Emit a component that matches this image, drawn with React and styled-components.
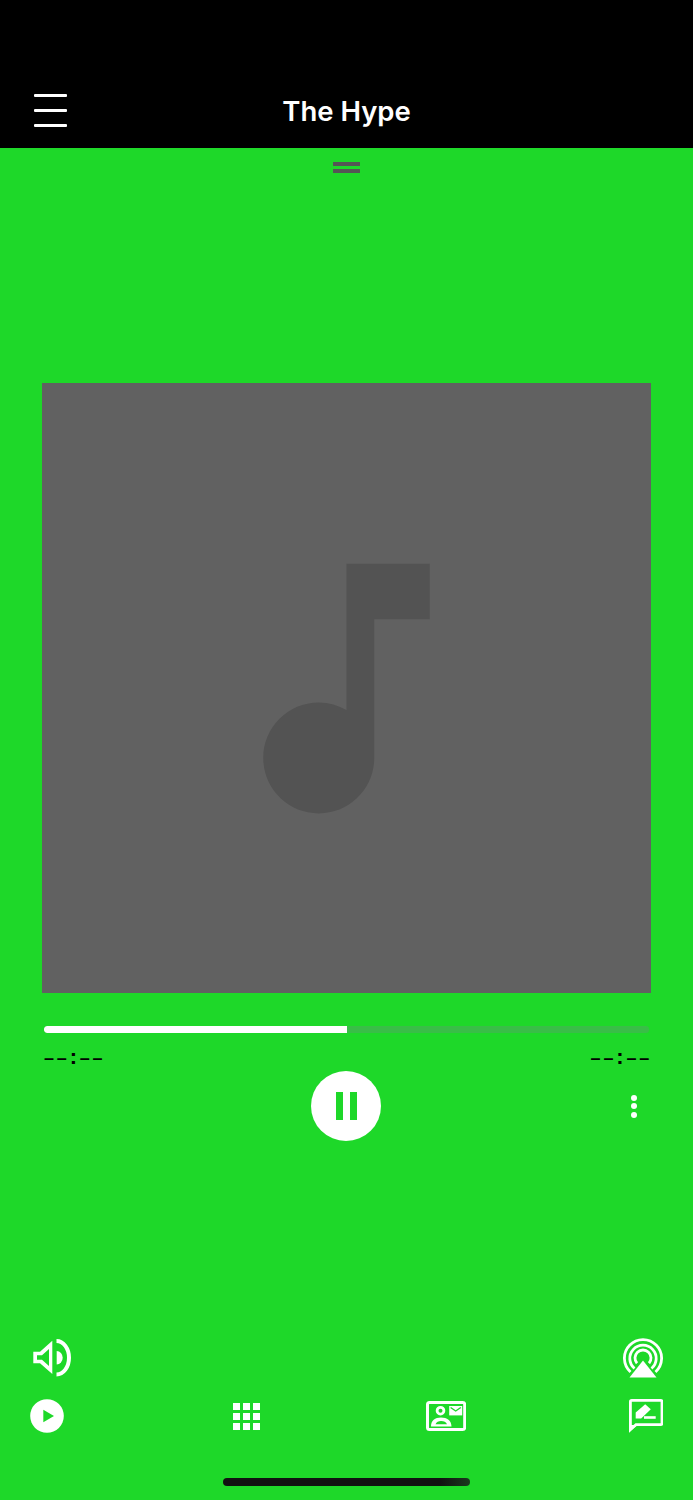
import styled, { createGlobalStyle } from "styled-components";

const green = "#1ed829";

const GlobalStyle = createGlobalStyle`
  html, body {
    margin: 0;
    padding: 0;
    background: ${green};
  }
`;

const Screen = styled.div`
  width: 100%;
  height: 1500px;
  display: flex;
  flex-direction: column;
  overflow: hidden;
  font-family: Inter, "Liberation Sans", sans-serif;
`;

const Header = styled.header`
  height: 148px;
  box-sizing: border-box;
  background: #000;
  display: grid;
  grid-template-columns: 1fr auto 1fr;
  align-items: center;
  padding: 73px 0 0 34px;
`;

const Burger = styled.button`
  width: 33px;
  height: 34px;
  padding: 0;
  border: 0;
  background: none;
  display: flex;
  flex-direction: column;
  justify-content: space-between;
  span {
    display: block;
    height: 3.4px;
    background: #fff;
    border-radius: 1px;
  }
`;

const Title = styled.h1`
  margin: 0;
  color: #fff;
  font-size: 27.5px;
  font-weight: 600;
  line-height: 34px;
  transform: translateX(-17px);
`;

const Player = styled.main`
  flex: 1;
  background: ${green};
  display: flex;
  flex-direction: column;
`;

const Handle = styled.div`
  width: 27px;
  height: 11px;
  margin: 14px auto 0;
  border-top: 4px solid #555;
  border-bottom: 4px solid #555;
  box-sizing: border-box;
`;

const Artwork = styled.div`
  width: 609px;
  height: 610px;
  margin: 210px 0 0 42px;
  background: #616161;
  display: flex;
  align-items: center;
  justify-content: center;
`;

const Track = styled.div`
  height: 6.5px;
  margin: 33px 44px 0;
  border-radius: 3px;
  background: #39be47;
  overflow: hidden;
`;

const Fill = styled.div`
  height: 100%;
  background: #fff;
  border-radius: 3px 0 0 3px;
`;

const TimeRow = styled.div`
  height: 22.5px;
  margin: 14px 41px 2px 44px;
  display: flex;
  justify-content: space-between;
  align-items: center;
`;

const Time = styled.span`
  color: #000;
  font-family: "Liberation Sans", sans-serif;
  font-size: 18px;
  font-weight: 700;
  line-height: 24px;
  letter-spacing: 2.8px;
  white-space: nowrap;
`;

const Colon = styled.span`
  font-size: 22px;
`;

const Controls = styled.div`
  height: 70px;
  display: grid;
  grid-template-columns: 311px 70px 1fr;
  align-items: center;
`;

const PauseButton = styled.button`
  grid-column: 2;
  width: 70px;
  height: 70px;
  padding: 0 0 0 1px;
  border: 0;
  border-radius: 50%;
  background: #fff;
  display: flex;
  align-items: center;
  justify-content: center;
  gap: 6.5px;
  span {
    width: 7.3px;
    height: 28px;
    background: ${green};
  }
`;

const MoreButton = styled.button`
  justify-self: end;
  margin-right: 56px;
  width: 6px;
  padding: 0;
  border: 0;
  background: none;
  display: flex;
  flex-direction: column;
  gap: 2.5px;
  span {
    width: 6px;
    height: 6px;
    border-radius: 50%;
    background: #fff;
  }
`;

const IconRow = styled.div`
  display: flex;
  justify-content: space-between;
  align-items: center;
  height: 40px;
  padding: ${(p) => (p.$top ? "0 30px 0 32px" : "0 27px")};
  margin-top: ${(p) => (p.$top ? "auto" : "18.5px")};
`;

const IconBox = styled.button`
  width: 40px;
  height: 40px;
  padding: 0;
  border: 0;
  background: none;
  display: flex;
  align-items: center;
  justify-content: center;
  svg {
    display: block;
  }
`;

const HomeBar = styled.div`
  width: 247px;
  height: 8px;
  margin: 42px auto 14px;
  border-radius: 4px;
  background: linear-gradient(90deg, #111 0%, #111 88%, #1b3a1e 100%);
`;

const NoteIcon = () => (
  <svg width="333" height="333" viewBox="0 0 24 24" fill="#535353">
    <path d="M12 3v10.55c-.59-.34-1.27-.55-2-.55-2.21 0-4 1.79-4 4s1.79 4 4 4 4-1.79 4-4V7h4V3h-6z" />
  </svg>
);

const SpeakerIcon = () => (
  <svg width="40" height="40" viewBox="0 0 40 40" fill="#fff">
    <path
      fillRule="evenodd"
      d="M1.3 13.7H8L20.3 2.7V36L8 25.3H1.3ZM5 17.2V21.8H10L17 28V11L10 17.2Z"
    />
    <path d="M24.7 13A6 6.8 0 0 1 24.7 26.6Z" />
    <path d="M24.5 3A12.5 16.8 0 0 1 24.5 36.6" fill="none" stroke="#fff" strokeWidth="4" />
  </svg>
);

const AirplayIcon = () => (
  <svg width="40" height="40" viewBox="0 0 40 40" fill="none" stroke="#fff" strokeWidth="2.8">
    <path d="M7.5 34A18.6 18.6 0 1 1 32.5 34" />
    <path d="M11.5 30.5A13.2 13.2 0 1 1 28.5 30.5" />
    <path d="M14 25.3A8 8 0 1 1 26 25.3" />
    <path d="M20 22.5L33.5 39.5H6.5Z" fill="#fff" stroke="none" />
  </svg>
);

const PlayIcon = () => (
  <svg width="40" height="40" viewBox="0 0 40 40">
    <circle cx="20" cy="20" r="16.8" fill="#fff" />
    <path d="M16.3 13.7L27 20L16.3 26.3Z" fill={green} />
  </svg>
);

const GridIcon = () => (
  <svg width="27" height="27" viewBox="0 0 27 27" fill="#fff">
    {[0, 10, 20].map((y) =>
      [0, 10, 20].map((x) => <rect key={`${x}-${y}`} x={x} y={y} width="7" height="7" />)
    )}
  </svg>
);

const CardIcon = () => (
  <svg width="40" height="30" viewBox="0 0 40 30">
    <rect x="1.5" y="1.5" width="37.2" height="27" rx="2" fill="none" stroke="#fff" strokeWidth="3" />
    <circle cx="14.5" cy="9.7" r="3.4" fill="none" stroke="#fff" strokeWidth="2.8" />
    <path
      fillRule="evenodd"
      fill="#fff"
      d="M5 25.5C5 19.5 9 16.5 15 16.5C21 16.5 25.5 19.5 25.5 25.5ZM9.5 23.3H21C20 21 18 20 15 20C12.5 20 10.5 21 9.5 23.3Z"
    />
    <rect x="23.2" y="5" width="13" height="9.4" fill="#fff" />
    <path d="M24.6 6.5L29.7 10L34.8 6.5" fill="none" stroke={green} strokeWidth="1.4" />
  </svg>
);

const ChatIcon = () => (
  <svg width="34" height="34" viewBox="0 0 34 34">
    <path
      d="M1.4 30.5V2.8Q1.4 1.4 2.8 1.4H31.6Q33 1.4 33 2.8V24.2Q33 25.6 31.6 25.6H7Z"
      fill="none"
      stroke="#fff"
      strokeWidth="2.8"
    />
    <path d="M0 33.7V26L8 26Z" fill="#fff" />
    <path d="M6.7 13.6L16.2 5.2L21.8 10.2L12.2 19.4H6.7Z" fill="#fff" />
    <rect x="15" y="17.2" width="11.7" height="2.6" fill="#fff" />
  </svg>
);

const TimeText = () => (
  <Time>
    ––<Colon>:</Colon>––
  </Time>
);

const App = () => {
  const progress = 50;

  return (
    <Screen>
      <GlobalStyle />
      <Header>
        <Burger aria-label="Menu">
          <span />
          <span />
          <span />
        </Burger>
        <Title>The Hype</Title>
      </Header>
      <Player>
        <Handle />
        <Artwork>
          <NoteIcon />
        </Artwork>
        <Track>
          <Fill style={{ width: `${progress}%` }} />
        </Track>
        <TimeRow>
          <TimeText />
          <TimeText />
        </TimeRow>
        <Controls>
          <PauseButton aria-label="Pause">
            <span />
            <span />
          </PauseButton>
          <MoreButton aria-label="More">
            <span />
            <span />
            <span />
          </MoreButton>
        </Controls>
        <IconRow $top>
          <IconBox aria-label="Volume">
            <SpeakerIcon />
          </IconBox>
          <IconBox aria-label="AirPlay">
            <AirplayIcon />
          </IconBox>
        </IconRow>
        <IconRow>
          <IconBox aria-label="Play">
            <PlayIcon />
          </IconBox>
          <IconBox aria-label="Apps">
            <GridIcon />
          </IconBox>
          <IconBox aria-label="Contact">
            <CardIcon />
          </IconBox>
          <IconBox aria-label="Message">
            <ChatIcon />
          </IconBox>
        </IconRow>
        <HomeBar />
      </Player>
    </Screen>
  );
};

export default App;
